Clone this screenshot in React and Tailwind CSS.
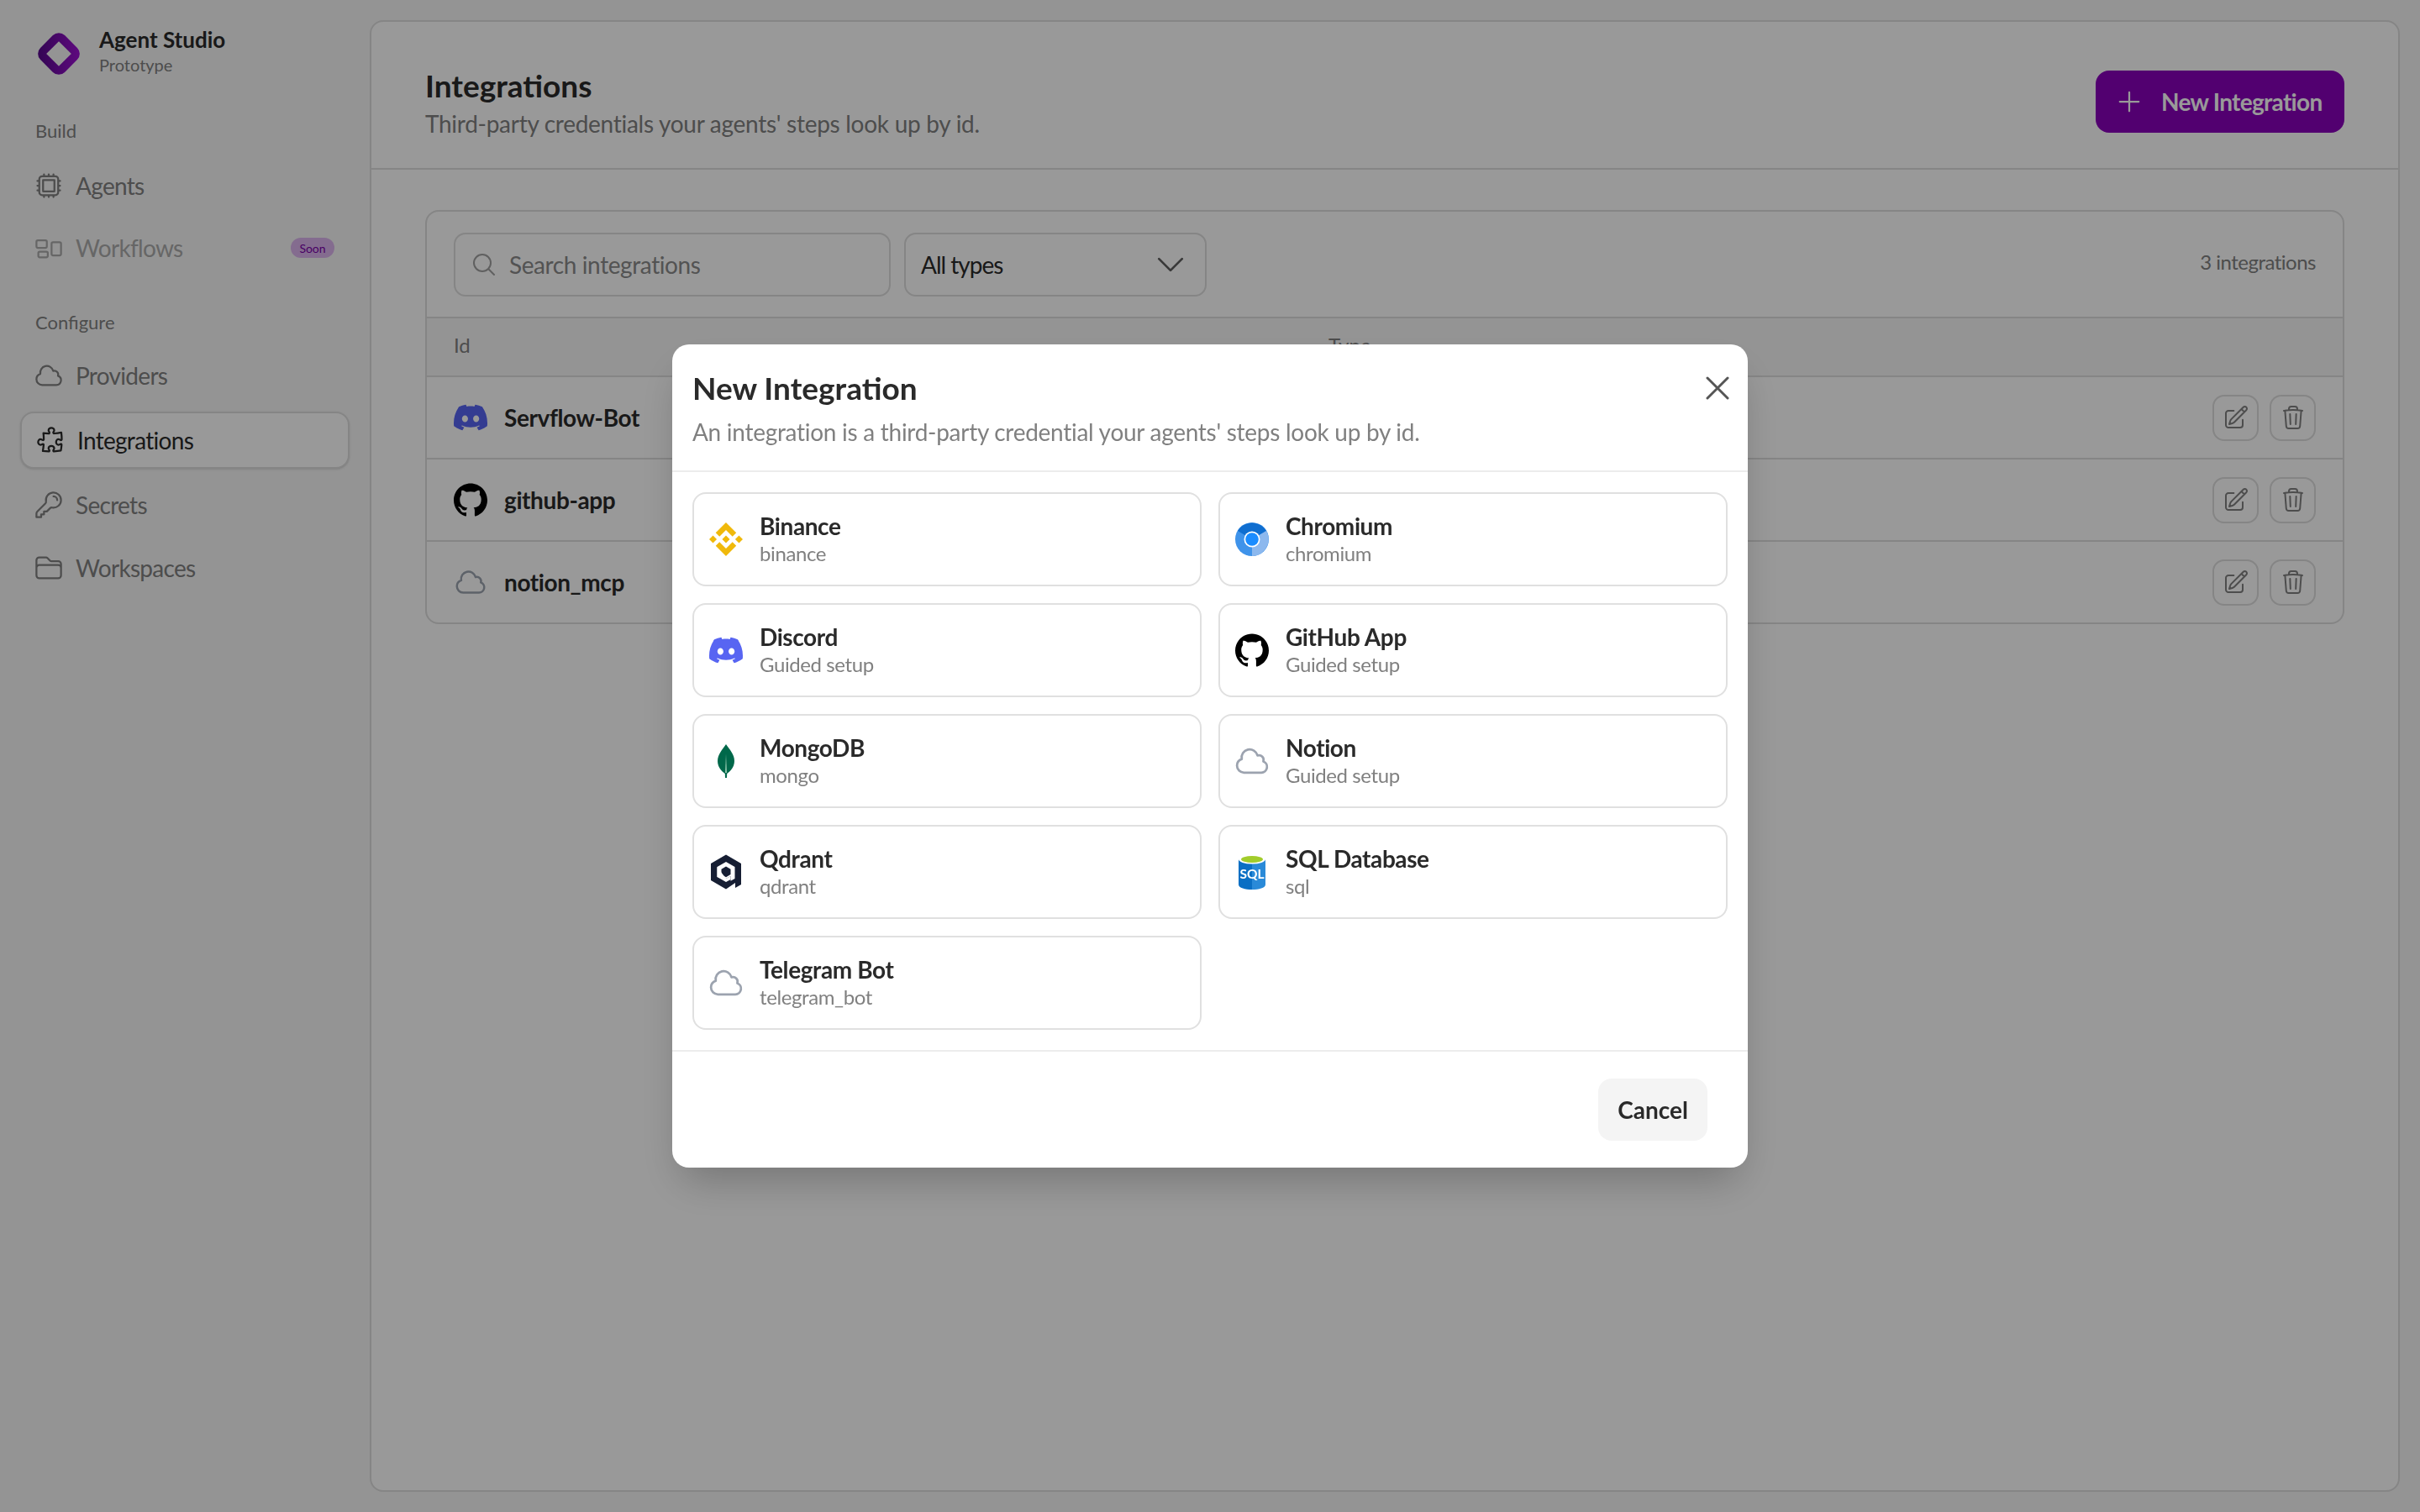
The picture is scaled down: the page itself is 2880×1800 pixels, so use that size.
import React from "react";
import { HiOutlineCpuChip, HiOutlineRectangleGroup, HiOutlineCloud, HiOutlinePuzzlePiece, HiOutlineKey, HiOutlineFolder, HiOutlinePencilSquare, HiOutlineTrash, HiOutlinePlus, HiOutlineXMark, HiOutlineMagnifyingGlass, HiOutlineChevronDown } from "react-icons/hi2";
import { SiBinance, SiDiscord, SiGithub } from "react-icons/si";

const Logo = () => (
  <svg width="52" height="52" viewBox="0 0 52 52">
    <defs>
      <linearGradient id="lg" x1="0" y1="1" x2="1" y2="0">
        <stop offset="0" stopColor="#5a0a8f" />
        <stop offset="1" stopColor="#9a10d0" />
      </linearGradient>
    </defs>
    <rect x="10.5" y="10.5" width="31" height="31" rx="5" transform="rotate(45 26 26)" fill="none" stroke="url(#lg)" strokeWidth="10" />
  </svg>
);

const Chromium = () => (
  <svg width="40" height="40" viewBox="0 0 40 40">
    <circle cx="20" cy="20" r="20" fill="#3f93ea" />
    <path d="M20 20 L3 10 A20 20 0 0 1 37 10 Z" fill="#0f6ed0" />
    <path d="M20 20 L37 10 A20 20 0 0 1 20 40 Z" fill="#8cb8ee" />
    <circle cx="20" cy="20" r="9.5" fill="#ffffff" />
    <circle cx="20" cy="20" r="7.8" fill="#1a8cff" />
  </svg>
);

const Mongo = () => (
  <svg width="44" height="44" viewBox="0 0 44 44">
    <path d="M22 2 C26 8 32 14 32 22 C32 30 26 35 23.2 37 L23 42 L21 42 L20.8 37 C18 35 12 30 12 22 C12 14 18 8 22 2 Z" fill="#00684A" />
    <path d="M22 14 L22.8 36 L21.2 36 Z" fill="#b8e0c8" />
  </svg>
);

const Qdrant = () => (
  <svg width="44" height="44" viewBox="0 0 44 44">
    <path d="M22 1.5 L40 12 L40 37 L33 41 L33 35 L22 42.5 L4 32 L4 12 Z" fill="#161e33" />
    <path d="M22 10 L32.5 16 L32.5 30 L27.5 32.8 L27.5 27 L22 30 L11.5 28 L11.5 16 Z" fill="#ffffff" />
    <path d="M22 15.5 L27.5 18.7 L27.5 25 L22 28.2 L16.5 25 L16.5 18.7 Z" fill="#161e33" />
    <path d="M11.5 16 L11.5 28 L22 34 L27.5 31 L27.5 27 L22 30 Z" fill="#ffffff" />
  </svg>
);

const Sql = () => (
  <svg width="44" height="44" viewBox="0 0 44 44">
    <path d="M6 7 L6 37 C6 41 14 43 22 43 L22 7 Z" fill="#0a6fc4" />
    <path d="M38 7 L38 37 C38 41 30 43 22 43 L22 7 Z" fill="#2a8ad8" />
    <ellipse cx="22" cy="7" rx="16" ry="5.5" fill="#ffffff" />
    <ellipse cx="22" cy="7" rx="13" ry="4" fill="#a2cc2a" />
    <text x="22" y="30" textAnchor="middle" fontFamily="Lato, sans-serif" fontWeight="700" fontSize="15.5" fill="#ffffff">SQL</text>
  </svg>
);

const Binance = () => <SiBinance size={40} color="#F0B90B" />;
const Discord = () => <SiDiscord size={40} color="#5865F2" />;
const Github = () => <SiGithub size={40} color="#000000" />;
const Cloud = () => <HiOutlineCloud size={44} color="#9ca3af" />;

const cards = [
  ["Binance", "binance", Binance],
  ["Chromium", "chromium", Chromium],
  ["Discord", "Guided setup", Discord],
  ["GitHub App", "Guided setup", Github],
  ["MongoDB", "mongo", Mongo],
  ["Notion", "Guided setup", Cloud],
  ["Qdrant", "qdrant", Qdrant],
  ["SQL Database", "sql", Sql],
  ["Telegram Bot", "telegram_bot", Cloud],
];

const rows = [
  ["Servflow-Bot", Discord],
  ["github-app", Github],
  ["notion_mcp", Cloud],
];

function NavItem({ icon: Icon, label, active, disabled, badge }) {
  return (
    <div
      className={
        active
          ? "flex items-center h-[68px] rounded-[16px] border-2 border-[#dedede] bg-white shadow-sm px-[16px] gap-[14px] text-[#2a2a2a]"
          : disabled
            ? "flex items-center h-[64px] px-[16px] gap-[14px] text-[#ababab]"
            : "flex items-center h-[64px] px-[16px] gap-[14px] text-[#808080]"
      }
    >
      <Icon size={36} className="shrink-0" />
      <span className="text-[28px] leading-none tracking-[-0.7px]">{label}</span>
      {badge && (
        <span className="ml-auto mr-[2px] flex items-center justify-center w-[52px] h-[24px] rounded-full bg-[#dcb4ee] text-[#7a00a8] text-[14px]">
          {badge}
        </span>
      )}
    </div>
  );
}

export default function App() {
  return (
    <div className="relative flex h-screen w-full overflow-hidden bg-[#f7f7f7] text-[#2a2a2a] font-['Lato',sans-serif]">
      <aside className="w-[440px] shrink-0 flex flex-col px-[24px]">
        <div className="flex items-start gap-[22px] pl-[20px] pt-[31px]">
          <span className="mt-[7px] block"><Logo /></span>
          <div className="flex flex-col">
            <span className="text-[26px] leading-[32px] font-bold">Agent Studio</span>
            <span className="text-[20px] leading-[28px] text-[#808080]">Prototype</span>
          </div>
        </div>
        <div className="pl-[18px] mt-[50px] mb-[18px] text-[22px] leading-[30px] text-[#808080]">Build</div>
        <nav className="flex flex-col gap-[10px]">
          <NavItem icon={HiOutlineCpuChip} label="Agents" />
          <NavItem icon={HiOutlineRectangleGroup} label="Workflows" disabled badge="Soon" />
        </nav>
        <div className="pl-[18px] mt-[42px] mb-[16px] text-[22px] leading-[30px] text-[#808080]">Configure</div>
        <nav className="flex flex-col gap-[11px]">
          <NavItem icon={HiOutlineCloud} label="Providers" />
          <NavItem icon={HiOutlinePuzzlePiece} label="Integrations" active />
          <NavItem icon={HiOutlineKey} label="Secrets" />
          <NavItem icon={HiOutlineFolder} label="Workspaces" />
        </nav>
      </aside>

      <main className="flex-1 my-[24px] mr-[24px] rounded-[16px] border-2 border-[#dedede] bg-white flex flex-col">
        <header className="h-[176px] shrink-0 border-b-2 border-[#dedede] flex items-center justify-between pt-[16px] px-[64px]">
          <div className="flex flex-col mt-[2px]">
            <h1 className="text-[37px] leading-[50px] font-bold">Integrations</h1>
            <p className="text-[28px] leading-[40px] tracking-[-0.28px] text-[#808080]">Third-party credentials your agents' steps look up by id.</p>
          </div>
          <button className="flex items-center gap-[20px] h-[74px] w-[296px] pl-[22px] rounded-[16px] bg-[#8900bb] text-white text-[28px] font-bold tracking-[-0.7px]">
            <HiOutlinePlus size={36} />
            <span>New Integration</span>
          </button>
        </header>
        <section className="py-[48px] px-[64px]">
          <div className="rounded-[16px] border-2 border-[#dedede] overflow-hidden">
            <div className="h-[127px] flex items-center gap-[16px] px-[32px] border-b-2 border-[#dedede]">
              <div className="flex items-center gap-[14px] w-[520px] h-[76px] rounded-[14px] border-2 border-[#dedede] pl-[18px]">
                <HiOutlineMagnifyingGlass size={32} color="#a0a0a0" />
                <span className="text-[28px] tracking-[-0.4px] text-[#8a8a8a]">Search integrations</span>
              </div>
              <div className="flex items-center justify-between w-[360px] h-[76px] rounded-[14px] border-2 border-[#dedede] pl-[18px] pr-[19px]">
                <span className="text-[28px] tracking-[-1px]">All types</span>
                <HiOutlineChevronDown size={44} color="#606060" />
              </div>
              <span className="ml-auto mb-[6px] text-[24px] tracking-[-0.5px] text-[#808080]">3 integrations</span>
            </div>
            <div className="h-[68px] grid grid-cols-[1041px_1fr] items-center pb-[4px] px-[32px] bg-[#f7f7f7] text-[24px] text-[#808080]">
              <span>Id</span>
              <span>Type</span>
            </div>
            {rows.map(([name, Icon]) => (
              <div key={name} className="h-[98px] border-t-2 border-[#dedede] flex items-center gap-[20px] px-[32px]">
                <span className="w-[40px] h-[44px] flex items-center justify-center"><Icon /></span>
                <span className="text-[28px] font-bold tracking-[-0.4px]">{name}</span>
                <div className="ml-auto flex gap-[13px]">
                  <span className="w-[55px] h-[55px] rounded-[14px] border-2 border-[#dedede] flex items-center justify-center text-[#808080]"><HiOutlinePencilSquare size={32} /></span>
                  <span className="w-[55px] h-[55px] rounded-[14px] border-2 border-[#dedede] flex items-center justify-center text-[#808080]"><HiOutlineTrash size={32} /></span>
                </div>
              </div>
            ))}
          </div>
        </section>
      </main>

      <div className="fixed inset-0 bg-black/40 flex items-center justify-center">
        <div className="w-[1280px] h-[980px] bg-white rounded-[20px] shadow-2xl flex flex-col">
          <div className="relative h-[152px] shrink-0 border-b-2 border-[#ececec] px-[24px] pt-[28px]">
            <h2 className="text-[37px] leading-[48px] font-bold">New Integration</h2>
            <p className="mt-[9px] text-[28px] leading-[38px] tracking-[-0.28px] text-[#808080]">An integration is a third-party credential your agents' steps look up by id.</p>
            <HiOutlineXMark size={48} color="#555555" className="absolute right-[12px] top-[28px]" />
          </div>
          <div className="grid grid-cols-2 gap-[20px] p-[24px]">
            {cards.map(([name, sub, Icon]) => (
              <div key={name} className="h-[112px] rounded-[16px] border-2 border-[#e0e0e0] flex items-center gap-[18px] px-[16px]">
                <span className="w-[44px] h-[44px] flex items-center justify-center shrink-0"><Icon /></span>
                <div className="flex flex-col">
                  <span className="text-[28px] leading-[34px] font-bold tracking-[-0.4px]">{name}</span>
                  <span className="text-[24px] leading-[32px] tracking-[-0.4px] text-[#808080]">{sub}</span>
                </div>
              </div>
            ))}
          </div>
          <div className="flex-1 border-t-2 border-[#ececec] flex items-center justify-end pr-[48px]">
            <button className="w-[130px] h-[74px] rounded-[16px] bg-[#f4f4f4] text-[28px] font-bold">Cancel</button>
          </div>
        </div>
      </div>
    </div>
  );
}
